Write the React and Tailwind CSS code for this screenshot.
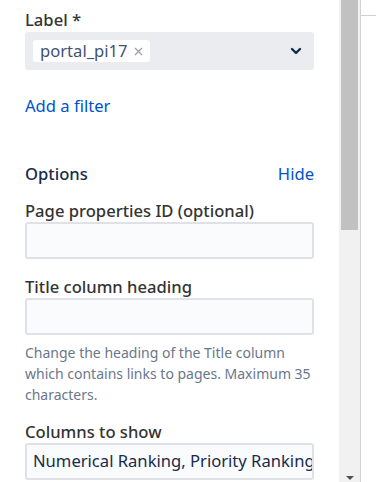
import { useState } from "react";

const font = { fontFamily: '"Noto Sans", "Open Sans", sans-serif' };

function FieldLabel({ children, className = "" }) {
  return (
    <div className={`text-[16.6px] leading-[20px] font-medium text-[#333333] ${className}`}>
      {children}
    </div>
  );
}

function TextInput({ value = "", className = "" }) {
  return (
    <div
      className={`h-[37px] border-2 border-[#dfe1e6] bg-[#fafbfc] rounded-[3px] flex items-center px-[6px] overflow-hidden whitespace-nowrap text-[16.6px] text-[#172b4d] ${className}`}
    >
      {value}
    </div>
  );
}

export default function App() {
  const [labels, setLabels] = useState(["portal_pi17"]);

  return (
    <div className="flex w-[376px] h-[482px] bg-white overflow-hidden" style={font}>
      {/* panel body */}
      <div className="w-[339px] shrink-0 px-[25px] pt-[10px]">
        <FieldLabel>Label *</FieldLabel>
        <div className="mt-[2px] h-[38px] bg-[#ebecf0] rounded-[3px] flex items-center pl-[8px] pr-[12px]">
          {labels.map((l) => (
            <span
              key={l}
              className="h-[22px] bg-white rounded-[3px] flex items-center pl-[7px] pr-[7px] gap-[6px] text-[16.6px] text-[#42526e]"
            >
              {l}
              <button onClick={() => setLabels(labels.filter((x) => x !== l))}>
                <svg width="9" height="9" viewBox="0 0 9 9" className="block">
                  <path d="M1 1l7 7M8 1l-7 7" stroke="#97a0af" strokeWidth="1.3" />
                </svg>
              </button>
            </span>
          ))}
          <svg className="ml-auto" width="12" height="8" viewBox="0 0 12 8">
            <path d="M2 2l4 4 4-4" fill="none" stroke="#172b4d" strokeWidth="2.4" strokeLinecap="round" strokeLinejoin="round" />
          </svg>
        </div>

        <div className="mt-[26px] text-[16.6px] leading-[20px] text-[#0052cc]">Add a filter</div>

        <div className="mt-[48px] flex items-center justify-between text-[16.6px] leading-[20px]">
          <span className="font-medium text-[#172b4d]">Options</span>
          <span className="text-[#0052cc]">Hide</span>
        </div>

        <FieldLabel className="mt-[17px]">Page properties ID (optional)</FieldLabel>
        <TextInput className="mt-[1px]" />

        <FieldLabel className="mt-[18px]">Title column heading</FieldLabel>
        <TextInput className="mt-[1px]" />

        <p className="mt-[7px] text-[14px] leading-[21px] text-[#6b778c]">
          Change the heading of the Title column which contains links to pages. Maximum 35 characters.
        </p>

        <FieldLabel className="mt-[17px]">Columns to show</FieldLabel>
        <TextInput className="mt-[1px]" value="Numerical Ranking, Priority Ranking, Status" />
      </div>

      {/* scrollbar */}
      <div className="w-[21px] shrink-0 bg-[#f1f1f1] flex flex-col items-center">
        <div className="w-[17px] h-[230px] bg-[#c1c1c1]" />
        <div className="mt-auto mb-[2px] w-0 h-0 border-l-[4px] border-r-[4px] border-t-[4px] border-l-transparent border-r-transparent border-t-[#505050]" />
      </div>
      <div className="w-px shrink-0 bg-[#d0d0d0]" />
      <div className="flex-1">
        <div className="mt-[15px] h-px bg-[#d0d0d0]" />
      </div>
    </div>
  );
}
